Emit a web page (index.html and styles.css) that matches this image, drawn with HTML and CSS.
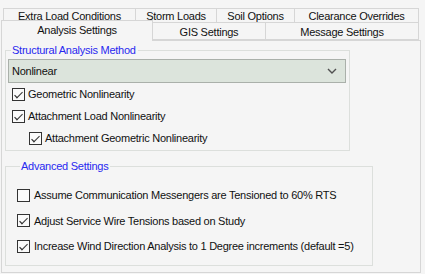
FILE: index.html
```html
<!DOCTYPE html>
<html>
<head>
<meta charset="utf-8">
<link rel="stylesheet" href="styles.css">
</head>
<body>
<div class="tabs">
  <div class="tab-row back">
    <div class="tab t-extra">Extra Load Conditions</div>
    <div class="tab t-storm">Storm Loads</div>
    <div class="tab t-soil">Soil Options</div>
    <div class="tab t-clear">Clearance Overrides</div>
  </div>
  <div class="tab-row front">
    <div class="tab selected t-analysis">Analysis Settings</div>
    <div class="tab t-gis">GIS Settings</div>
    <div class="tab t-msg">Message Settings</div>
  </div>
</div>
<div class="panel">
  <fieldset class="group g-method">
    <legend>Structural Analysis Method</legend>
    <div class="select">
      <span>Nonlinear</span>
      <svg class="chev" width="10" height="6" viewBox="0 0 10 6"><path d="M1 1 L5 5 L9 1" fill="none" stroke="#505050" stroke-width="1.4"/></svg>
    </div>
    <div class="check-row"><span class="cb checked"></span><span>Geometric Nonlinearity</span></div>
    <div class="check-row"><span class="cb checked"></span><span>Attachment Load Nonlinearity</span></div>
    <div class="check-row indent"><span class="cb checked"></span><span>Attachment Geometric Nonlinearity</span></div>
  </fieldset>
  <fieldset class="group g-adv">
    <legend>Advanced Settings</legend>
    <div class="check-row r1"><span class="cb"></span><span>Assume Communication Messengers are Tensioned to 60% RTS</span></div>
    <div class="check-row"><span class="cb checked"></span><span>Adjust Service Wire Tensions based on Study</span></div>
    <div class="check-row r3"><span class="cb checked"></span><span>Increase Wind Direction Analysis to 1 Degree increments (default =5)</span></div>
  </fieldset>
</div>
</body>
</html>
```
FILE: styles.css
```css
html, body {
  margin: 0;
  padding: 0;
  background: #f5f5f5;
  font-family: "Liberation Sans", Arial, sans-serif;
  font-size: 11px;
  letter-spacing: -0.25px;
  color: #111;
  width: 425px;
  height: 274px;
  overflow: hidden;
}

.tabs {
  padding-top: 8px;
  height: 32px;
  position: relative;
}

.tab-row {
  display: flex;
}

.tab-row.back {
  padding-left: 3px;
  height: 14px;
}

.tab-row.front {
  padding-left: 1px;
  height: 18px;
}

.tab {
  box-sizing: border-box;
  border: 1px solid #d6d6d6;
  background: #f5f5f5;
  display: flex;
  align-items: center;
  justify-content: center;
  white-space: nowrap;
}

.back .tab {
  border-bottom: none;
  height: 14px;
  padding-top: 1px;
  border-left: none;
}
.back .tab:first-child { border-left: 1px solid #d6d6d6; }

.front .tab {
  height: 18px;
  padding-top: 2px;
  border-left: none;
}

.t-extra { width: 133px; }
.t-storm { width: 81px; }
.t-soil { width: 78px; }
.t-clear { width: 124px; }

.tab.selected {
  border-left: 1px solid #d6d6d6;
  border-bottom: none;
  height: 21px;
  margin-top: -2px;
  padding-top: 0;
  padding-bottom: 3px;
  background: #f5f5f5;
  position: relative;
  z-index: 2;
}

.t-analysis { width: 152px; }
.t-gis { width: 113px; }
.t-msg { width: 153px; }

.panel {
  box-sizing: border-box;
  margin-left: 1px;
  width: 420px;
  height: 233px;
  border: 1px solid #d6d6d6;
  background: #f5f5f5;
  padding: 3px 0 0 3px;
}

.group {
  margin: 0;
  border: 1px solid #dcdfdc;
  padding: 0;
  box-sizing: border-box;
}

.group legend {
  color: #2828f0;
  padding: 0 2px 0 1px;
  margin-left: 3px;
  line-height: 13px;
  font-size: 11px;
}

.g-method {
  width: 345px;
  padding: 2px 3px 1px 2px;
}

.g-adv {
  margin-top: 9px;
  width: 368px;
  padding: 9px 0 6px 11px;
}

.select {
  box-sizing: border-box;
  height: 24px;
  border: 1px solid #aab0aa;
  background: #dce4dc;
  display: flex;
  align-items: center;
  justify-content: space-between;
  padding: 0 8px 0 3px;
}

.chev { display: block; }

.check-row {
  display: flex;
  align-items: center;
  height: 22px;
  gap: 3px;
  white-space: nowrap;
}

.g-method .check-row { padding-left: 4px; }
.g-method .check-row.indent { padding-left: 21px; }

.g-adv .check-row { height: 25px; gap: 4px; }
.g-adv .check-row.r1,
.g-adv .check-row.r3 { height: 26px; }

.cb {
  box-sizing: border-box;
  width: 13px;
  height: 13px;
  border: 1px solid #333;
  background: #fafafa;
  flex: none;
  position: relative;
}

.cb.checked::after {
  content: "";
  position: absolute;
  left: 2px;
  top: 1px;
  width: 6px;
  height: 3px;
  border-left: 1px solid #333;
  border-bottom: 1px solid #333;
  transform: translate(0, 2px) rotate(-45deg) scaleX(1.2);
  transform-origin: center;
}
```
